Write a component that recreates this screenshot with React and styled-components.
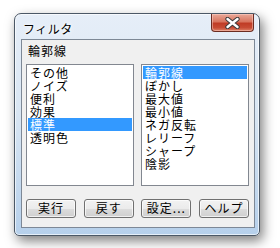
import React from "react";
import styled, { createGlobalStyle } from "styled-components";

const GlobalStyle = createGlobalStyle`
  html, body {
    margin: 0;
    background: #ffffff;
  }
  body {
    font-family: "Noto Sans CJK JP", "DejaVu Sans", sans-serif;
    font-size: 12px;
    color: #000;
  }
`;

const leftItems = ["その他", "ノイズ", "便利", "効果", "標準", "透明色"];
const rightItems = ["輪郭線", "ぼかし", "最大値", "最小値", "ネガ反転", "レリーフ", "シャープ", "陰影"];
const buttons = ["実行", "戻す", "設定...", "ヘルプ"];

function App() {
  return (
    <Stage>
      <GlobalStyle />
      <Window>
        <TitleBar>
          <Title>フィルタ</Title>
          <CloseButton>
            <svg width="17" height="12" viewBox="0 0 17 12">
              <path d="M3.5 2 L13.5 10 M13.5 2 L3.5 10" stroke="#3a3a3a" strokeWidth="4.4" strokeLinecap="round" />
              <path d="M3.5 2 L13.5 10 M13.5 2 L3.5 10" stroke="#ffffff" strokeWidth="2.4" strokeLinecap="round" />
            </svg>
          </CloseButton>
        </TitleBar>
        <Client>
          <Caption>輪郭線</Caption>
          <Lists>
            <ListBox>
              {leftItems.map((item) => (
                <Row key={item} selected={item === "標準"}>
                  {item}
                </Row>
              ))}
            </ListBox>
            <ListBox>
              {rightItems.map((item) => (
                <Row key={item} selected={item === "輪郭線"}>
                  {item}
                </Row>
              ))}
            </ListBox>
          </Lists>
          <ButtonRow>
            {buttons.map((b) => (
              <Button key={b}>{b}</Button>
            ))}
          </ButtonRow>
        </Client>
      </Window>
    </Stage>
  );
}

export default App;

const Stage = styled.div`
  padding: 13px 0 0 14px;
  height: 248px;
  box-sizing: border-box;
`;

const Window = styled.div`
  width: 246px;
  height: 223px;
  box-sizing: border-box;
  border: 1px solid #4b5866;
  border-radius: 7px 7px 5px 5px;
  background: linear-gradient(to bottom, #e6eef8 0%, #d9e6f3 45%, #b6d0eb 100%);
  box-shadow: inset 0 0 0 1px rgba(255, 255, 255, 0.65), 3px 5px 12px rgba(0, 0, 0, 0.5);
  display: flex;
  flex-direction: column;
  padding: 0 4px 7px 6px;
`;

const TitleBar = styled.div`
  height: 25px;
  display: flex;
  justify-content: space-between;
  align-items: flex-start;
`;

const Title = styled.div`
  font-size: 12px;
  line-height: 14px;
  padding: 8px 0 0 2px;
  letter-spacing: 0.5px;
  color: #000;
  text-shadow: 0 0 6px #ffffff, 0 0 3px #ffffff;
`;

const CloseButton = styled.div`
  width: 43px;
  height: 18px;
  box-sizing: border-box;
  margin-right: 1px;
  border: 1px solid #6b2c22;
  border-top: none;
  border-radius: 0 0 4px 4px;
  background: linear-gradient(to bottom, #e9a898 0%, #d8755f 45%, #c03c26 55%, #c74b34 80%, #de8268 100%);
  box-shadow: inset 0 0 0 1px rgba(255, 220, 210, 0.45);
  display: flex;
  align-items: center;
  justify-content: center;
`;

const Client = styled.div`
  flex: 1;
  border: 1px solid #7d8896;
  background: #f0f0f0;
  display: flex;
  flex-direction: column;
  padding: 3px 5px 0 4px;
`;

const Caption = styled.div`
  font-size: 12px;
  line-height: 15px;
  letter-spacing: 1px;
  padding-left: 2px;
  height: 21px;
`;

const Lists = styled.div`
  display: flex;
  gap: 7px;
`;

const ListBox = styled.div`
  width: 108px;
  height: 122px;
  box-sizing: border-box;
  border: 1px solid #828790;
  background: #ffffff;
  padding: 1px 1px;
  overflow: hidden;
`;

const Row = styled.div`
  height: 13px;
  line-height: 13px;
  font-size: 12px;
  letter-spacing: 1px;
  padding-left: 2px;
  white-space: nowrap;
  background: ${(p) => (p.selected ? "#3399ff" : "transparent")};
  color: ${(p) => (p.selected ? "#ffffff" : "#000000")};
`;

const ButtonRow = styled.div`
  display: flex;
  justify-content: space-between;
  margin-top: 13px;
`;

const Button = styled.div`
  width: 50px;
  height: 19px;
  box-sizing: border-box;
  border: 1px solid #707070;
  border-radius: 3px;
  background: linear-gradient(to bottom, #f2f2f2 0%, #ebebeb 50%, #dddddd 51%, #cfcfcf 100%);
  box-shadow: inset 0 0 0 1px rgba(255, 255, 255, 0.7);
  font-size: 12px;
  letter-spacing: 1px;
  line-height: 16px;
  text-align: center;
`;
